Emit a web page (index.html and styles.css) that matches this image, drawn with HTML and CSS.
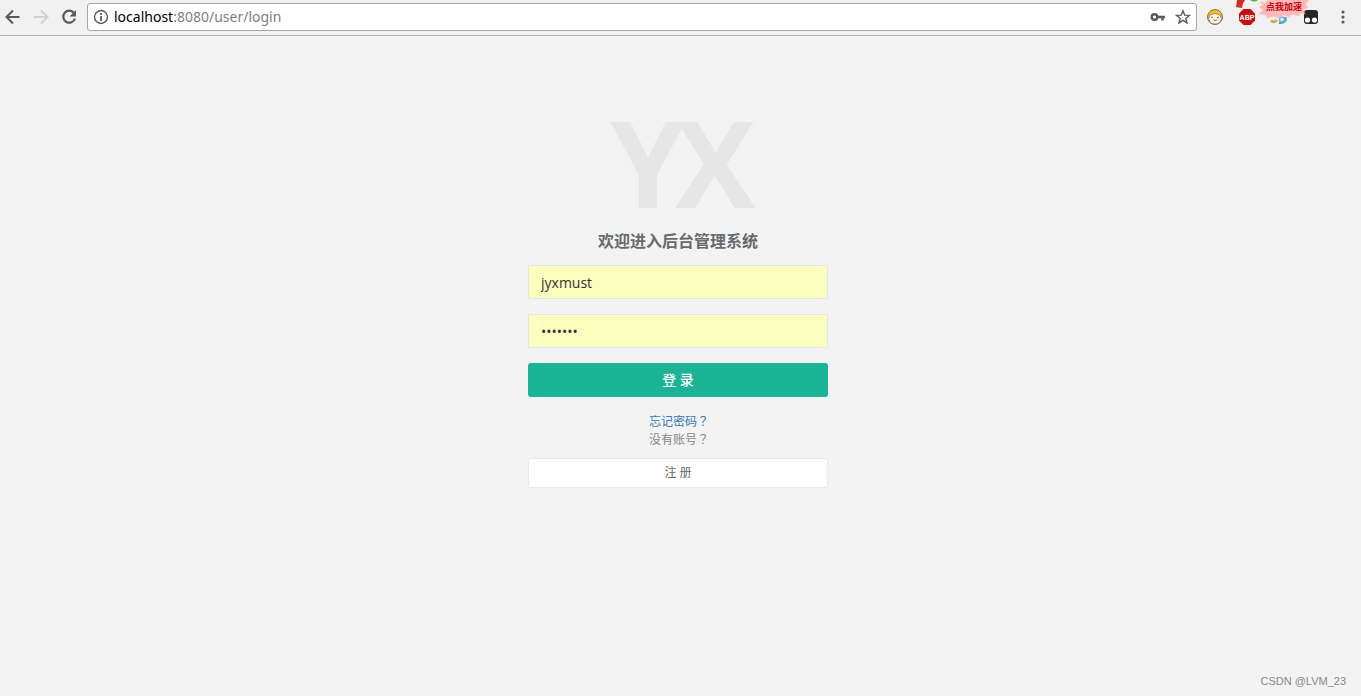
FILE: index.html
```html
<!DOCTYPE html>
<html lang="zh-CN">
<head>
<meta charset="utf-8">
<title>登录</title>
<link rel="stylesheet" href="styles.css">
</head>
<body>
<header class="toolbar">
  <button class="tool" type="button" aria-label="后退"><svg width="16" height="16" viewBox="0 0 16 16" fill="none" stroke="#5a5a5a" stroke-width="2"><path d="M14.500 8H2M8 1.500 1.500 8 8 14.500"/></svg></button>
  <button class="tool" type="button" aria-label="前进"><svg width="16" height="16" viewBox="0 0 16 16" fill="none" stroke="#d2d2d2" stroke-width="2"><path d="M1 8h12.500M8 1.500 14.500 8 8 14.500"/></svg></button>
  <button class="tool" type="button" aria-label="重新加载"><svg width="16" height="16" viewBox="0 0 16 16"><path d="M13 4A6 6 0 1 0 14 9.500" fill="none" stroke="#5a5a5a" stroke-width="2.200"/><path d="M15 1v6.500H8.500z" fill="#5a5a5a"/></svg></button>
  <div class="address">
    <svg width="16" height="16" viewBox="0 0 16 16" fill="none" stroke="#5a5a5a"><circle cx="8" cy="8" r="6.500" stroke-width="1.400"/><path d="M8 7v5M8 4v2" stroke-width="1.800"/></svg>
    <div class="url"><span class="host">localhost</span>:8080/user/login</div>
    <button class="tool" type="button" aria-label="密码"><svg width="16" height="16" viewBox="0 0 16 16" fill="none" stroke="#5a5a5a" stroke-width="2.400"><circle cx="4.500" cy="8" r="2.800"/><path d="M7.500 8H15M12.500 8v3.500"/></svg></button>
    <button class="tool" type="button" aria-label="收藏"><svg width="16" height="16" viewBox="0 0 16 16" fill="none" stroke="#5a5a5a" stroke-width="1.400"><path d="m8 1.800 1.700 4.300 4.700.3-3.600 3 1.200 4.500L8 11.400l-4 2.500 1.200-4.500-3.600-3 4.700-.3z"/></svg></button>
  </div>
  <div class="extensions">
    <button class="tool" type="button" aria-label="扩展"><svg width="18" height="18" viewBox="0 0 18 18"><circle cx="9" cy="9" r="7.500" fill="#fbbc1d" stroke="#665544" stroke-width=".8"/><path d="M4 7Q9 4 14 7l1.500 4Q14 16 9 16T2.500 11z" fill="#fff5e6" stroke="#807060" stroke-width=".7"/><path d="m5 9 2 .8M13 9l-2 .8M7.500 12q1.500 1 3 0" fill="none" stroke="#5f5048" stroke-width=".9"/></svg></button>
    <button class="tool" type="button" aria-label="Adblock Plus"><svg width="18" height="18" viewBox="0 0 18 18"><path d="M5.500 1h7L17 5.500v7L12.500 17h-7L1 12.500v-7z" fill="#c70d12"/><text class="abp" x="9" y="12" text-anchor="middle">ABP</text></svg></button>
    <button class="tool" type="button" aria-label="加速"><svg width="18" height="18" viewBox="0 0 18 18" fill="none"><path d="M1 12.500q3 3 6-.5" stroke="#e99a3c" stroke-width="2.500"/><path d="M9 14.500q4 1 6.500-2.500V9" stroke="#4c9ed2" stroke-width="2.500"/><circle cx="12" cy="11.500" r="2.500" stroke="#6fb2dc" stroke-width="1.500"/></svg></button>
    <button class="tool" type="button" aria-label="Tampermonkey"><svg width="18" height="18" viewBox="0 0 18 18"><rect x="2" y="2" width="14" height="14" rx="3" fill="#262626"/><circle cx="5.500" cy="12" r="2.600" fill="#fff"/><circle cx="12.500" cy="12" r="2.600" fill="#fff"/></svg></button>
    <button class="tool" type="button" aria-label="菜单"><svg width="18" height="18" viewBox="0 0 18 18" fill="#5a5a5a"><circle cx="9" cy="4" r="1.600"/><circle cx="9" cy="9" r="1.600"/><circle cx="9" cy="14" r="1.600"/></svg></button>
    <div class="boost">
      <svg width="76" height="22" viewBox="0 0 76 22"><path d="m1 0-1 7 6 1q0-4 3-8z" fill="#d92b26"/><path d="M14 0q4 3 8 0z" fill="#43b62c"/><path class="burst" d="m24 1 5 2 3-3h41l-4 4 3 3-5 3 2 4-5-1-1 3-7-2-3 3-5-2-6 3-4-2-7 2-1-3-7-1 4-4-4-3 4-2z" fill="#ffb9b9"/></svg>
      <span class="boost-label">点我加速</span>
    </div>
  </div>
</header>
<main class="page">
  <div class="login">
    <h1 class="logo">YX</h1>
    <h2 class="welcome">欢迎进入后台管理系统</h2>
    <form class="form">
      <input class="field" type="text" value="jyxmust" aria-label="用户名">
      <input class="field" type="password" value="1234567" aria-label="密码">
      <button class="submit" type="submit">登 录</button>
    </form>
    <div class="help">
      <a class="forgot" href="#">忘记密码<span lang="zh-TW">？</span></a>
      <p class="no-account">没有账号<span lang="zh-TW">？</span></p>
    </div>
    <button class="register" type="button">注 册</button>
  </div>
</main>
<footer class="credit">CSDN @LVM_23</footer>
</body>
</html>
```
FILE: styles.css
```css
* { box-sizing: border-box; }
body {
  margin: 0;
  min-height: 100vh;
  display: flex;
  flex-direction: column;
  background: #f3f3f3;
  color: #676a6c;
  font-family: "Open Sans", "Noto Sans CJK SC", sans-serif;
  font-size: 14px;
}
button { font-family: inherit; cursor: pointer; }
svg { display: block; flex: none; }
.toolbar {
  height: 36px;
  display: flex;
  align-items: center;
  gap: 12px;
  padding: 0 9px 2px 5px;
  background: #f1f1f1;
  border-bottom: 1px solid #b4b4b4;
}
.tool { border: 0; padding: 0; background: none; }
.address {
  flex: 1;
  height: 28px;
  display: flex;
  align-items: center;
  gap: 9px;
  margin-left: -2px;
  padding: 0 5px;
  border: 1px solid #a6a6a6;
  border-radius: 3px;
  background: #fff;
}
.url {
  flex: 1;
  margin-left: -4px;
  color: #808080;
  font-family: "Noto Sans", sans-serif;
  font-size: 14px;
}
.host { color: #000; }
.extensions { position: relative; display: flex; gap: 14px; margin-left: -3px; }
.abp { fill: #fff; font: bold 7px "Liberation Sans", sans-serif; }
.boost { position: absolute; left: 30px; top: -8px; }
.burst { filter: drop-shadow(0 0 1px #ffc8c8); }
.boost-label {
  position: absolute;
  left: 30px;
  top: 0;
  color: #c8000a;
  font-size: 9px;
  font-weight: 700;
  line-height: 13px;
  white-space: nowrap;
}
.page { flex: 1; padding: 66px 5px 0 0; }
.login {
  width: 300px;
  margin: 0 auto;
  display: flex;
  flex-direction: column;
  text-align: center;
}
.logo {
  margin: 0;
  color: #e6e6e6;
  font-size: 120px;
  font-weight: 700;
  line-height: 120px;
  letter-spacing: -10px;
}
.welcome { margin: 7px 0 12px; font-size: 16px; font-weight: 700; line-height: 24px; }
.form { display: flex; flex-direction: column; gap: 15px; }
.field {
  width: 100%;
  height: 34px;
  padding: 6px 12px;
  border: 1px solid #e5e6e7;
  background: #faffbd;
  color: #333;
  font-family: inherit;
  font-size: 14px;
}
.submit {
  height: 34px;
  padding: 0 0 2px;
  border: 0;
  border-radius: 3px;
  background: #1ab394;
  color: #fff;
  font-size: 14px;
  font-weight: 500;
}
.help { margin: 16px 0 9px; padding-left: 2px; font-size: 12px; line-height: 18px; }
.forgot { display: block; color: #337ab7; text-decoration: none; }
.no-account { margin: 0; color: #888; }
.register {
  height: 30px;
  padding: 0 0 2px;
  border: 1px solid #e7eaec;
  border-radius: 3px;
  background: #fff;
  color: #676a6c;
  font-size: 12px;
}
.credit {
  padding: 0 15px 7px;
  color: #888;
  font-family: "Liberation Sans", sans-serif;
  font-size: 11px;
  line-height: 16px;
  text-align: right;
}
```
